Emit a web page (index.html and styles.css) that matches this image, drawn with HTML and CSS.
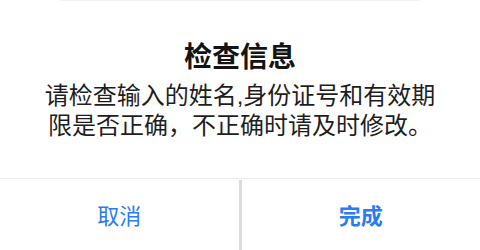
FILE: index.html
```html
<!DOCTYPE html>
<html lang="zh-CN">
<head>
<meta charset="utf-8">
<title>检查信息</title>
<link rel="stylesheet" href="styles.css">
</head>
<body>
<div class="alert">
  <div class="top-edge"></div>
  <div class="content">
    <h1 class="title">检查信息</h1>
    <div class="message">
      <div class="line">请检查输入的姓名,身份证号和有效期</div>
      <div class="line">限是否正确，不正确时请及时修改。</div>
    </div>
  </div>
  <div class="actions">
    <button class="btn">取消</button>
    <div class="vline"></div>
    <button class="btn btn-primary">完成</button>
  </div>
</div>
</body>
</html>
```
FILE: styles.css
```css
html, body {
  margin: 0;
  padding: 0;
  background: #ffffff;
}
body {
  width: 480px;
  height: 250px;
  overflow: hidden;
  font-family: "Noto Sans CJK SC", "Noto Sans", sans-serif;
}
.alert {
  display: flex;
  flex-direction: column;
  height: 250px;
}
.top-edge {
  height: 1px;
  margin: 0 60px;
  background: #f2f2f2;
}
.content {
  display: flex;
  flex-direction: column;
  align-items: center;
  padding: 36px 0 36px;
  border-bottom: 1px solid #ececec;
}
.title {
  margin: 0;
  font-size: 28px;
  line-height: 36px;
  font-weight: 700;
  color: #141414;
}
.message {
  margin: 8px 0 1px;
  display: flex;
  flex-direction: column;
  align-items: center;
  color: #1e1e1e;
}
.line {
  font-family: "Liberation Sans", "Noto Sans CJK SC", sans-serif;
  font-size: 24px;
  line-height: 30px;
  height: 30px;
}
.actions {
  flex: 1;
  display: flex;
}
.btn {
  flex: 1;
  border: 0;
  background: transparent;
  font-family: inherit;
  font-size: 22px;
  color: #2a7cf0;
  padding: 0 0 2px;
}
.btn-primary {
  font-weight: 600;
}
.vline {
  width: 3px;
  margin-top: 1px;
  background: #dcdcdc;
}
```
